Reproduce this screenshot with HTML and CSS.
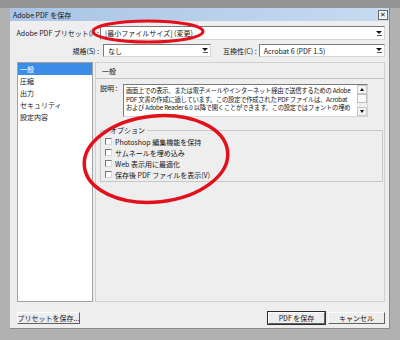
FILE: index.html
```html
<!DOCTYPE html>
<html lang="ja">
<head>
    <meta charset="UTF-8">
    <title>Adobe PDF を保存</title>
    <link rel="stylesheet" href="styles.css">
</head>
<body>
<div class="screen">
    <div class="dialog">
        <div class="titlebar">
            <span>Adobe PDF を保存</span>
            <span class="close">✕</span>
        </div>

        <div class="row row-preset">
            <span class="lbl">Adobe PDF プリセット(A :</span>
            <div class="combo grow"><span class="val">[最小ファイルサイズ] (変更)</span><i class="arrow"></i></div>
        </div>
        <div class="row row-std">
            <span class="lbl">規格(S) :</span>
            <div class="combo combo-std"><span class="val">なし</span><i class="arrow"></i></div>
            <span class="lbl2">互換性(C) :</span>
            <div class="combo grow combo-compat"><span class="val">Acrobat 6 (PDF 1.5)</span><i class="arrow"></i></div>
        </div>

        <div class="main">
            <ul class="nav">
                <li class="on">一般</li>
                <li>圧縮</li>
                <li>出力</li>
                <li>セキュリティ</li>
                <li>設定内容</li>
            </ul>
            <div class="panel">
                <div class="panel-head">一般</div>
                <div class="desc">
                    <span class="desc-lbl">説明 :</span>
                    <div class="textbox">
                        <div class="text">
                            <div>画面上での表示、または電子メールやインターネット経由で送信するための Adobe</div>
                            <div>PDF 文書の作成に適しています。この設定で作成された PDF ファイルは、Acrobat</div>
                            <div>および Adobe Reader 6.0 以降で開くことができます。この設定ではフォントの埋め</div>
                        </div>
                        <div class="scroll">
                            <span class="sbtn up"></span>
                            <span class="thumb"></span>
                            <span class="track"></span>
                            <span class="sbtn down"></span>
                        </div>
                    </div>
                </div>
                <fieldset class="options">
                    <legend>オプション</legend>
                    <div class="check"><i class="box"></i>Photoshop 編集機能を保持</div>
                    <div class="check"><i class="box"></i>サムネールを埋め込み</div>
                    <div class="check"><i class="box"></i>Web 表示用に最適化</div>
                    <div class="check"><i class="box"></i>保存後 PDF ファイルを表示(V)</div>
                </fieldset>
            </div>
        </div>

        <div class="footer">
            <span class="btn btn-preset">プリセットを保存...</span>
            <span class="btn btn-default">PDF を保存</span>
            <span class="btn">キャンセル</span>
        </div>
    </div>

    <!-- red marker annotations drawn over the screenshot -->
    <svg class="marks" width="400" height="340" viewBox="0 0 400 340">
        <ellipse cx="148" cy="31.5" rx="55" ry="10.5" fill="none" stroke="#e3101b" stroke-width="3"/>
        <ellipse cx="156" cy="159" rx="72" ry="43" fill="none" stroke="#e3101b" stroke-width="3.5" transform="rotate(-6 156 159)"/>
    </svg>
</div>
</body>
</html>
```

FILE: styles.css
```css
* {
    box-sizing: border-box;
}
body {
    margin: 0;
    font-family: "Noto Sans CJK JP", "Noto Sans", sans-serif;
    font-size: 7px;
    color: #151515;
}
.screen {
    position: relative;
    width: 400px;
    height: 340px;
    padding: 8px 10px 11px 10px;
    background: linear-gradient(#949494 0 8px, #b1b1b1 8px);
}
.dialog {
    height: 321px;
    background-color: #eeeeee;
    border-right: 1px solid #8a8a8a;
    border-bottom: 1px solid #8a8a8a;
    display: flex;
    flex-direction: column;
}
.titlebar {
    height: 13px;
    flex: none;
    background: linear-gradient(to right, #a9c4e5, #c7daf0);
    display: flex;
    align-items: center;
    justify-content: space-between;
    padding: 0 1px 0 3px;
}
.close {
    width: 10px;
    height: 10px;
    border: 1px solid #6a6a6a;
    background-color: #f5f5f5;
    font-family: "DejaVu Sans", sans-serif;
    font-weight: bold;
    font-size: 7px;
    line-height: 8px;
    text-align: center;
}

/* preset / standard rows */
.row {
    display: flex;
    align-items: stretch;
    padding-right: 4px;
    flex: none;
}
.row-preset {
    height: 14px;
    margin-top: 5px;
}
.row-std {
    height: 13px;
    margin-top: 4px;
}
.lbl {
    width: 90px;
    text-align: right;
    white-space: nowrap;
    padding-right: 1px;
    display: flex;
    align-items: center;
    justify-content: flex-end;
}
.lbl2 {
    margin-left: 12px;
    white-space: nowrap;
    display: flex;
    align-items: center;
}
.combo {
    background-color: #fff;
    border: 1px solid;
    border-color: #7a7a7a #d6d6d6 #d6d6d6 #7a7a7a;
    display: flex;
    align-items: center;
    padding-left: 4px;
}
.grow {
    flex: 1;
}
.combo-std {
    width: 108px;
    margin-left: 3px;
}
.combo-compat {
    margin-left: 2px;
}
.val {
    flex: 1;
    white-space: nowrap;
}
.arrow {
    width: 10px;
    height: 100%;
    display: flex;
    flex-direction: column;
    align-items: center;
    justify-content: center;
    gap: 1px;
}
.arrow::before {
    content: "";
    border-left: 3px solid transparent;
    border-right: 3px solid transparent;
    border-top: 3px solid #111;
}
.arrow::after {
    content: "";
    width: 5px;
    height: 1px;
    background-color: #555;
}

/* main area */
.main {
    height: 240px;
    margin-top: 5px;
    display: flex;
    gap: 2px;
    padding: 0 4px 0 7px;
    flex: none;
}
.nav {
    width: 76px;
    margin: 0;
    padding: 0;
    list-style: none;
    background-color: #fff;
    border: 1px solid #a2a2a2;
}
.nav li {
    height: 12px;
    line-height: 12px;
    padding-left: 2px;
}
.nav li.on {
    background-color: #3b8de7;
    color: #fff;
}
.panel {
    flex: 1;
    border: 1px solid #d0d0d0;
    display: flex;
    flex-direction: column;
}
.panel-head {
    height: 16px;
    border-bottom: 1px solid #c4c4c4;
    padding-left: 6px;
    display: flex;
    align-items: center;
}
.desc {
    display: flex;
    margin-top: 5px;
    padding-left: 4px;
}
.desc-lbl {
    width: 23px;
    line-height: 7px;
    padding-top: 1px;
}
.textbox {
    width: 245px;
    height: 33px;
    background-color: #fff;
    border: 1px solid;
    border-color: #7a7a7a #d6d6d6 #d6d6d6 #7a7a7a;
    display: flex;
}
.text {
    flex: 1;
    overflow: hidden;
    padding: 2px 0 0 2px;
    font-size: 6.3px;
    line-height: 8.5px;
    letter-spacing: -0.25px;
    white-space: nowrap;
}
.scroll {
    width: 10px;
    display: flex;
    flex-direction: column;
    background-color: #f0f0f0;
}
.sbtn {
    height: 9px;
    display: flex;
    align-items: center;
    justify-content: center;
    background-color: #f4f4f4;
    border: 1px solid #c9c9c9;
}
.sbtn.up::before {
    content: "";
    border-left: 2.5px solid transparent;
    border-right: 2.5px solid transparent;
    border-bottom: 3px solid #111;
}
.sbtn.down::before {
    content: "";
    border-left: 2.5px solid transparent;
    border-right: 2.5px solid transparent;
    border-top: 3px solid #111;
}
.thumb {
    height: 9px;
    background-color: #fafafa;
    border: 1px solid #bdbdbd;
}
.track {
    flex: 1;
}

/* options group */
.options {
    margin: 9px 1px 0 4px;
    padding: 2px 0 1px 4px;
    border: 1px solid #c8c8c8;
}
.options legend {
    padding: 0 2px;
    margin-left: 3px;
    line-height: 8px;
}
.check {
    height: 11px;
    display: flex;
    align-items: center;
    gap: 3px;
    white-space: nowrap;
}
.box {
    width: 7px;
    height: 7px;
    background-color: #fff;
    border: 1px solid;
    border-color: #777 #d8d8d8 #d8d8d8 #777;
}

/* bottom buttons */
.footer {
    flex: 1;
    display: flex;
    align-items: flex-start;
    gap: 3px;
    padding: 10px 4px 0 7px;
}
.btn {
    width: 57px;
    height: 12px;
    display: flex;
    align-items: center;
    justify-content: center;
    white-space: nowrap;
    background-color: #ededed;
    border: 1px solid;
    border-color: #fdfdfd #626262 #626262 #fdfdfd;
}
.btn-preset {
    width: 63px;
    margin-right: auto;
}
.btn-default {
    outline: 1px solid #2e2e2e;
}

.marks {
    position: absolute;
    left: 0;
    top: 0;
    pointer-events: none;
}
```
